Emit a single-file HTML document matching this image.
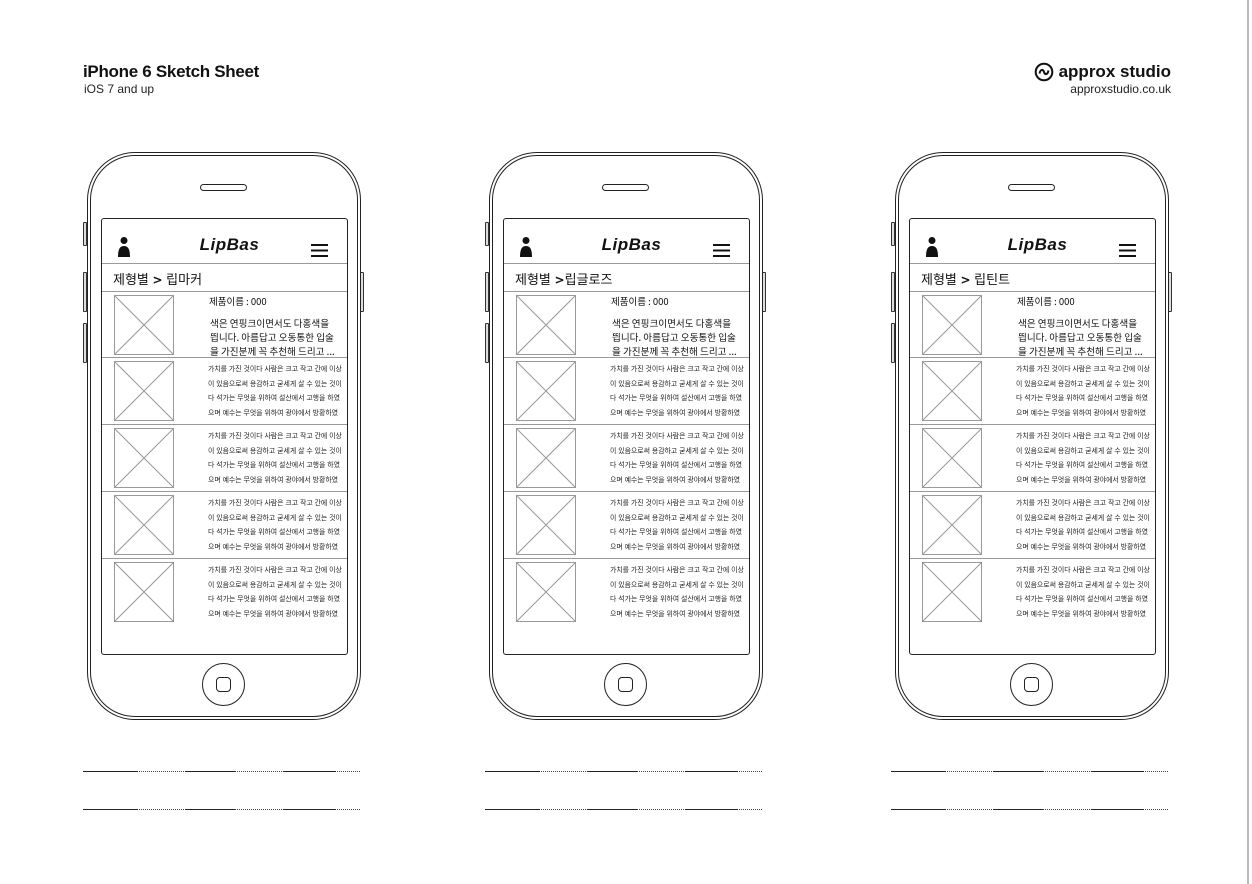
<!DOCTYPE html>
<html><head><meta charset="utf-8">
<style>
*{margin:0;padding:0;box-sizing:border-box}
body{width:1252px;height:884px;background:#fff;position:relative;overflow:hidden;font-family:"Liberation Sans","Noto Sans CJK KR",sans-serif;color:#111}
.vline{position:absolute;left:1247px;top:0;width:2px;height:884px;background:#bbb}
.t1{position:absolute;left:83px;top:62px;font-size:17px;font-weight:bold;letter-spacing:-0.3px}
.t2{position:absolute;left:84px;top:82px;font-size:12px;color:#222}
.r1{position:absolute;right:81px;top:62px;font-size:17px;font-weight:bold;display:flex;align-items:center;gap:5px}
.r2{position:absolute;right:81px;top:82px;font-size:12px;color:#222}
.ph{position:absolute;top:0;width:290px;height:884px}
.body{position:absolute;left:7px;top:152px;width:274px;height:568px;border:1.5px solid #222;border-radius:48px}
.body2{position:absolute;left:10px;top:155px;width:268px;height:562px;border:1.2px solid #222;border-radius:45px}
.btn{position:absolute;width:4px;border:1px solid #333;background:#ddd;border-radius:1px}
.spk{position:absolute;left:120px;top:184px;width:47px;height:7px;border:1.5px solid #222;border-radius:4px}
.scr{position:absolute;left:21px;top:218px;width:247px;height:437px;border:1.5px solid #222;border-radius:3px;overflow:hidden}
.hdr{position:absolute;left:0;top:0;width:100%;height:45px;border-bottom:1.5px solid #999}
.logo{position:absolute;left:5px;width:100%;top:16px;text-align:center;font-size:17px;font-weight:bold;font-style:italic;letter-spacing:0.5px}
.crumb{position:absolute;left:11px;top:50px;font-size:13px}
.bline{position:absolute;left:0;top:72px;width:100%;border-top:1.5px solid #999}
.row{position:absolute;left:0;width:100%;border-bottom:1.2px solid #999}
.img{position:absolute;left:12px;top:3px;width:60px;height:60px}
.nm{position:absolute;left:107px;top:3px;font-size:9.5px;font-family:"Noto Sans CJK KR",sans-serif;line-height:12px}
.ds{position:absolute;left:108px;top:24px;font-size:9.6px;line-height:14px;white-space:nowrap;font-family:"Noto Sans CJK KR",sans-serif}
.sm{position:absolute;left:106px;top:5px;font-size:6.9px;line-height:14.6px;white-space:nowrap;color:#222}
.home{position:absolute;left:122px;top:663px;width:43px;height:43px;border:1.3px solid #222;border-radius:50%}
.home i{position:absolute;left:13px;top:13px;width:15px;height:15px;border:1.3px solid #222;border-radius:4px}
.ln{position:absolute;left:3px;width:278px;height:1px;background:
linear-gradient(90deg,#222 0 55px,transparent 55px 102px,#222 102px 152px,transparent 152px 200px,#222 200px 253px,transparent 253px),
repeating-linear-gradient(90deg,#444 0 1px,transparent 1px 2px)}
</style></head><body>
<div class="vline"></div>
<div class="t1">iPhone 6 Sketch Sheet</div>
<div class="t2">iOS 7 and up</div>
<div class="r1"><svg width="20" height="20" viewBox="0 0 20 20"><circle cx="10" cy="10" r="8.3" fill="none" stroke="#111" stroke-width="2"/><path d="M5.5 11.5 C6.5 7,9 7,10 10 S13.5 13,14.5 8.5" fill="none" stroke="#111" stroke-width="2"/></svg>approx studio</div>
<div class="r2">approxstudio.co.uk</div>

<div class="ph" style="left:80px">
<div class="btn" style="left:3px;top:222px;height:24px"></div><div class="btn" style="left:3px;top:272px;height:40px"></div><div class="btn" style="left:3px;top:323px;height:40px"></div><div class="btn" style="left:280px;top:272px;height:40px"></div>
<div class="body"></div><div class="body2"></div><div class="spk"></div>
<div class="scr">
<div class="hdr"><svg style="position:absolute;left:15px;top:17px" width="14" height="22" viewBox="0 0 14 22"><circle cx="7" cy="4.5" r="3.5" fill="#111"/><path d="M1 21 C1 13,3 10,7 10 S13 13,13 21 Z" fill="#111"/></svg><div class="logo">LipBas</div><svg style="position:absolute;left:209px;top:25px" width="17" height="13"><path d="M0 1H17M0 6.5H17M0 12H17" stroke="#111" stroke-width="2"/></svg></div>
<div class="crumb">제형별 <b style="font-family:'DejaVu Sans';font-size:12px">&gt;</b> 립마커</div>
<div class="bline"></div>
<div class="row" style="top:73px;height:66px"><svg class="img" viewBox="0 0 60 60"><rect x=".5" y=".5" width="59" height="59" fill="none" stroke="#999"/><path d="M0 0L60 60M60 0L0 60" stroke="#999"/></svg><div class="nm">제품이름 : 000</div><div class="ds">색은 연핑크이면서도 다홍색을<br>띕니다. 아름답고 오동통한 입술<br>을 가진분께 꼭 추천해 드리고 ...</div></div>
<div class="row" style="top:139px;height:67px"><svg class="img" viewBox="0 0 60 60"><rect x=".5" y=".5" width="59" height="59" fill="none" stroke="#999"/><path d="M0 0L60 60M60 0L0 60" stroke="#999"/></svg><div class="sm">가치를 가진 것이다 사람은 크고 작고 간에 이상<br>이 있음으로써 용감하고 굳세게 살 수 있는 것이<br>다 석가는 무엇을 위하여 설산에서 고행을 하였<br>으며 예수는 무엇을 위하여 광야에서 방황하였</div></div>
<div class="row" style="top:206px;height:67px"><svg class="img" viewBox="0 0 60 60"><rect x=".5" y=".5" width="59" height="59" fill="none" stroke="#999"/><path d="M0 0L60 60M60 0L0 60" stroke="#999"/></svg><div class="sm">가치를 가진 것이다 사람은 크고 작고 간에 이상<br>이 있음으로써 용감하고 굳세게 살 수 있는 것이<br>다 석가는 무엇을 위하여 설산에서 고행을 하였<br>으며 예수는 무엇을 위하여 광야에서 방황하였</div></div>
<div class="row" style="top:273px;height:67px"><svg class="img" viewBox="0 0 60 60"><rect x=".5" y=".5" width="59" height="59" fill="none" stroke="#999"/><path d="M0 0L60 60M60 0L0 60" stroke="#999"/></svg><div class="sm">가치를 가진 것이다 사람은 크고 작고 간에 이상<br>이 있음으로써 용감하고 굳세게 살 수 있는 것이<br>다 석가는 무엇을 위하여 설산에서 고행을 하였<br>으며 예수는 무엇을 위하여 광야에서 방황하였</div></div>
<div class="row" style="top:340px;height:67px;border:none"><svg class="img" viewBox="0 0 60 60"><rect x=".5" y=".5" width="59" height="59" fill="none" stroke="#999"/><path d="M0 0L60 60M60 0L0 60" stroke="#999"/></svg><div class="sm">가치를 가진 것이다 사람은 크고 작고 간에 이상<br>이 있음으로써 용감하고 굳세게 살 수 있는 것이<br>다 석가는 무엇을 위하여 설산에서 고행을 하였<br>으며 예수는 무엇을 위하여 광야에서 방황하였</div></div>
</div>
<div class="home"><i></i></div>
<div class="ln" style="top:771px"></div><div class="ln" style="top:809px"></div>
</div>

<div class="ph" style="left:482px">
<div class="btn" style="left:3px;top:222px;height:24px"></div><div class="btn" style="left:3px;top:272px;height:40px"></div><div class="btn" style="left:3px;top:323px;height:40px"></div><div class="btn" style="left:280px;top:272px;height:40px"></div>
<div class="body"></div><div class="body2"></div><div class="spk"></div>
<div class="scr">
<div class="hdr"><svg style="position:absolute;left:15px;top:17px" width="14" height="22" viewBox="0 0 14 22"><circle cx="7" cy="4.5" r="3.5" fill="#111"/><path d="M1 21 C1 13,3 10,7 10 S13 13,13 21 Z" fill="#111"/></svg><div class="logo">LipBas</div><svg style="position:absolute;left:209px;top:25px" width="17" height="13"><path d="M0 1H17M0 6.5H17M0 12H17" stroke="#111" stroke-width="2"/></svg></div>
<div class="crumb">제형별 <b style="font-family:'DejaVu Sans';font-size:12px">&gt;</b>립글로즈</div>
<div class="bline"></div>
<div class="row" style="top:73px;height:66px"><svg class="img" viewBox="0 0 60 60"><rect x=".5" y=".5" width="59" height="59" fill="none" stroke="#999"/><path d="M0 0L60 60M60 0L0 60" stroke="#999"/></svg><div class="nm">제품이름 : 000</div><div class="ds">색은 연핑크이면서도 다홍색을<br>띕니다. 아름답고 오동통한 입술<br>을 가진분께 꼭 추천해 드리고 ...</div></div>
<div class="row" style="top:139px;height:67px"><svg class="img" viewBox="0 0 60 60"><rect x=".5" y=".5" width="59" height="59" fill="none" stroke="#999"/><path d="M0 0L60 60M60 0L0 60" stroke="#999"/></svg><div class="sm">가치를 가진 것이다 사람은 크고 작고 간에 이상<br>이 있음으로써 용감하고 굳세게 살 수 있는 것이<br>다 석가는 무엇을 위하여 설산에서 고행을 하였<br>으며 예수는 무엇을 위하여 광야에서 방황하였</div></div>
<div class="row" style="top:206px;height:67px"><svg class="img" viewBox="0 0 60 60"><rect x=".5" y=".5" width="59" height="59" fill="none" stroke="#999"/><path d="M0 0L60 60M60 0L0 60" stroke="#999"/></svg><div class="sm">가치를 가진 것이다 사람은 크고 작고 간에 이상<br>이 있음으로써 용감하고 굳세게 살 수 있는 것이<br>다 석가는 무엇을 위하여 설산에서 고행을 하였<br>으며 예수는 무엇을 위하여 광야에서 방황하였</div></div>
<div class="row" style="top:273px;height:67px"><svg class="img" viewBox="0 0 60 60"><rect x=".5" y=".5" width="59" height="59" fill="none" stroke="#999"/><path d="M0 0L60 60M60 0L0 60" stroke="#999"/></svg><div class="sm">가치를 가진 것이다 사람은 크고 작고 간에 이상<br>이 있음으로써 용감하고 굳세게 살 수 있는 것이<br>다 석가는 무엇을 위하여 설산에서 고행을 하였<br>으며 예수는 무엇을 위하여 광야에서 방황하였</div></div>
<div class="row" style="top:340px;height:67px;border:none"><svg class="img" viewBox="0 0 60 60"><rect x=".5" y=".5" width="59" height="59" fill="none" stroke="#999"/><path d="M0 0L60 60M60 0L0 60" stroke="#999"/></svg><div class="sm">가치를 가진 것이다 사람은 크고 작고 간에 이상<br>이 있음으로써 용감하고 굳세게 살 수 있는 것이<br>다 석가는 무엇을 위하여 설산에서 고행을 하였<br>으며 예수는 무엇을 위하여 광야에서 방황하였</div></div>
</div>
<div class="home"><i></i></div>
<div class="ln" style="top:771px"></div><div class="ln" style="top:809px"></div>
</div>

<div class="ph" style="left:888px">
<div class="btn" style="left:3px;top:222px;height:24px"></div><div class="btn" style="left:3px;top:272px;height:40px"></div><div class="btn" style="left:3px;top:323px;height:40px"></div><div class="btn" style="left:280px;top:272px;height:40px"></div>
<div class="body"></div><div class="body2"></div><div class="spk"></div>
<div class="scr">
<div class="hdr"><svg style="position:absolute;left:15px;top:17px" width="14" height="22" viewBox="0 0 14 22"><circle cx="7" cy="4.5" r="3.5" fill="#111"/><path d="M1 21 C1 13,3 10,7 10 S13 13,13 21 Z" fill="#111"/></svg><div class="logo">LipBas</div><svg style="position:absolute;left:209px;top:25px" width="17" height="13"><path d="M0 1H17M0 6.5H17M0 12H17" stroke="#111" stroke-width="2"/></svg></div>
<div class="crumb">제형별 <b style="font-family:'DejaVu Sans';font-size:12px">&gt;</b> 립틴트</div>
<div class="bline"></div>
<div class="row" style="top:73px;height:66px"><svg class="img" viewBox="0 0 60 60"><rect x=".5" y=".5" width="59" height="59" fill="none" stroke="#999"/><path d="M0 0L60 60M60 0L0 60" stroke="#999"/></svg><div class="nm">제품이름 : 000</div><div class="ds">색은 연핑크이면서도 다홍색을<br>띕니다. 아름답고 오동통한 입술<br>을 가진분께 꼭 추천해 드리고 ...</div></div>
<div class="row" style="top:139px;height:67px"><svg class="img" viewBox="0 0 60 60"><rect x=".5" y=".5" width="59" height="59" fill="none" stroke="#999"/><path d="M0 0L60 60M60 0L0 60" stroke="#999"/></svg><div class="sm">가치를 가진 것이다 사람은 크고 작고 간에 이상<br>이 있음으로써 용감하고 굳세게 살 수 있는 것이<br>다 석가는 무엇을 위하여 설산에서 고행을 하였<br>으며 예수는 무엇을 위하여 광야에서 방황하였</div></div>
<div class="row" style="top:206px;height:67px"><svg class="img" viewBox="0 0 60 60"><rect x=".5" y=".5" width="59" height="59" fill="none" stroke="#999"/><path d="M0 0L60 60M60 0L0 60" stroke="#999"/></svg><div class="sm">가치를 가진 것이다 사람은 크고 작고 간에 이상<br>이 있음으로써 용감하고 굳세게 살 수 있는 것이<br>다 석가는 무엇을 위하여 설산에서 고행을 하였<br>으며 예수는 무엇을 위하여 광야에서 방황하였</div></div>
<div class="row" style="top:273px;height:67px"><svg class="img" viewBox="0 0 60 60"><rect x=".5" y=".5" width="59" height="59" fill="none" stroke="#999"/><path d="M0 0L60 60M60 0L0 60" stroke="#999"/></svg><div class="sm">가치를 가진 것이다 사람은 크고 작고 간에 이상<br>이 있음으로써 용감하고 굳세게 살 수 있는 것이<br>다 석가는 무엇을 위하여 설산에서 고행을 하였<br>으며 예수는 무엇을 위하여 광야에서 방황하였</div></div>
<div class="row" style="top:340px;height:67px;border:none"><svg class="img" viewBox="0 0 60 60"><rect x=".5" y=".5" width="59" height="59" fill="none" stroke="#999"/><path d="M0 0L60 60M60 0L0 60" stroke="#999"/></svg><div class="sm">가치를 가진 것이다 사람은 크고 작고 간에 이상<br>이 있음으로써 용감하고 굳세게 살 수 있는 것이<br>다 석가는 무엇을 위하여 설산에서 고행을 하였<br>으며 예수는 무엇을 위하여 광야에서 방황하였</div></div>
</div>
<div class="home"><i></i></div>
<div class="ln" style="top:771px"></div><div class="ln" style="top:809px"></div>
</div>
</body></html>
